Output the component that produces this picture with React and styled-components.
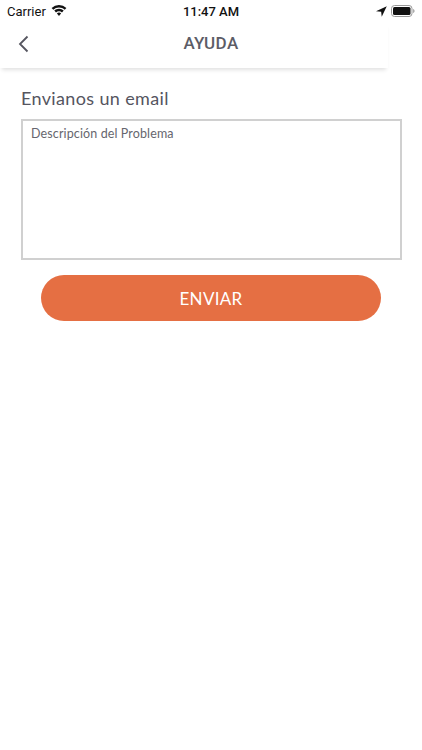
import React from 'react'
import styled, { createGlobalStyle } from 'styled-components'

const Global = createGlobalStyle`
  html, body { margin: 0; padding: 0; background: #fff; }
  body { font-family: "Lato", "Liberation Sans", sans-serif; }
`

const Page = styled.div`
  width: 422px;
  height: 750px;
  overflow: hidden;
  background: #fff;
  display: flex;
  flex-direction: column;
`

const StatusBar = styled.div`
  height: 22px;
  padding: 0 7px 0 7px;
  display: grid;
  grid-template-columns: 1fr auto 1fr;
  align-items: center;
  font-family: "Roboto", "Liberation Sans", sans-serif;
  color: #111;
`

const Carrier = styled.div`
  display: flex;
  align-items: center;
  gap: 5px;
  font-size: 13px;
`

const Clock = styled.div`
  font-size: 13px;
  font-weight: 500;
`

const StatusRight = styled.div`
  display: flex;
  justify-content: flex-end;
  align-items: center;
  gap: 4px;
`

const Header = styled.header`
  width: 388px;
  height: 46px;
  display: flex;
  align-items: center;
  justify-content: center;
  position: relative;
  box-shadow: 0 4px 4px -2px rgba(0, 0, 0, 0.12);
`

const BackButton = styled.button`
  position: absolute;
  left: 16px;
  top: 12px;
  padding: 0;
  border: 0;
  background: none;
  display: flex;
`

const Title = styled.h1`
  margin: 0 0 4px 34px;
  font-family: "Roboto", sans-serif;
  font-size: 17px;
  font-weight: 500;
  letter-spacing: 0.4px;
  color: #5c5c66;
`

const Content = styled.main`
  padding: 19px 21px 0;
  display: flex;
  flex-direction: column;
`

const Heading = styled.h2`
  margin: 0 0 10px;
  font-size: 18px;
  line-height: 22px;
  font-weight: 400;
  letter-spacing: 0.36px;
  color: #55555f;
`

const Message = styled.textarea`
  box-sizing: border-box;
  width: 381px;
  height: 141px;
  padding: 4px 8px;
  border: 2px solid #d0d0d0;
  border-radius: 0;
  resize: none;
  outline: none;
  font-family: inherit;
  font-size: 12.5px;
  line-height: 17px;
  letter-spacing: 0.12px;
  color: #55555f;

  &::placeholder {
    color: #66666e;
    opacity: 1;
  }
`

const Send = styled.button`
  align-self: flex-start;
  width: 340px;
  height: 46px;
  margin: 15px 0 0 20px;
  border: 0;
  border-radius: 23px;
  background: #e56f43;
  color: #fff;
  font-family: inherit;
  font-size: 17px;
  letter-spacing: 0.3px;
`

const Wifi = () => (
  <svg width="16" height="12" viewBox="0 0 16 12" fill="#111">
    <path d="M8 2.600c2.200 0 4.200.8 5.700 2.200l1.700-1.800A10.800 10.800 0 0 0 8 0 10.800 10.800 0 0 0 .6 3l1.700 1.800A8.300 8.300 0 0 1 8 2.600z" />
    <path d="M8 6.300c1.200 0 2.200.4 3 1.100l1.700-1.800A6.900 6.900 0 0 0 8 3.800c-1.800 0-3.400.7-4.700 1.800L5 7.400c.8-.7 1.800-1.100 3-1.100z" />
    <path d="M8 7.600c-.8 0-1.500.3-2.100.8L8 11l2.100-2.600c-.6-.5-1.300-.8-2.100-.8z" />
  </svg>
)

const LocationArrow = () => (
  <svg width="11" height="11" viewBox="0 0 10 10" fill="#111">
    <path d="M9.800.2 0 4.700l4.700.5.500 4.600z" />
  </svg>
)

const Battery = () => (
  <svg width="24" height="12" viewBox="0 0 24 12">
    <rect x=".5" y=".5" width="20.500" height="11" rx="3" fill="none" stroke="#999" />
    <rect x="2" y="2" width="17.500" height="8" rx="1.500" fill="#111" />
    <path d="M22.200 4v4c.8-.3 1.300-1.100 1.300-2s-.5-1.700-1.300-2z" fill="#999" />
  </svg>
)

const Chevron = () => (
  <svg width="16" height="20" viewBox="0 0 16 20" fill="none" stroke="#55555f" strokeWidth="1.800">
    <path d="M11.500 2.500 4 10l7.500 7.500" />
  </svg>
)

export default function App() {
  return (
    <Page>
      <Global />
      <StatusBar>
        <Carrier>Carrier <Wifi /></Carrier>
        <Clock>11:47 AM</Clock>
        <StatusRight><LocationArrow /><Battery /></StatusRight>
      </StatusBar>
      <Header>
        <BackButton aria-label="Volver"><Chevron /></BackButton>
        <Title>AYUDA</Title>
      </Header>
      <Content>
        <Heading>Envianos un email</Heading>
        <Message placeholder="Descripción del Problema" />
        <Send>ENVIAR</Send>
      </Content>
    </Page>
  )
}
